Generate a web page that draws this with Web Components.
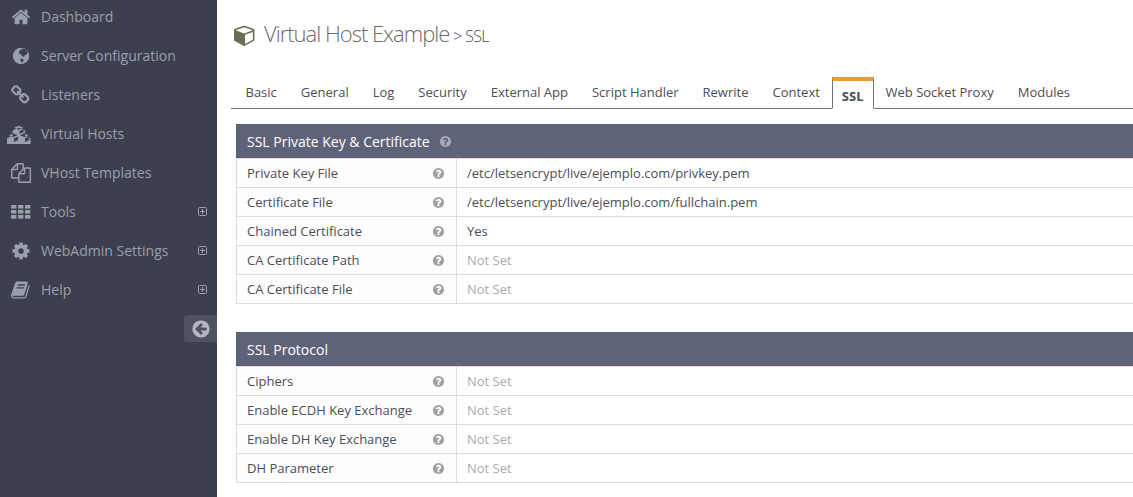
<!DOCTYPE html>
<html>
<head>
<meta charset="utf-8">
<title>SSL</title>
<style>
  html, body { margin: 0; height: 100%; overflow: hidden; background: #fff; }
  body { display: flex; font-family: "Open Sans", sans-serif; }
</style>
</head>
<body>
<side-bar></side-bar>
<main-panel>
  <page-title name="Virtual Host Example" sub="&gt; SSL"></page-title>
  <tab-bar active="SSL" tabs="Basic,General,Log,Security,External App,Script Handler,Rewrite,Context,SSL,Web Socket Proxy,Modules"></tab-bar>
  <config-table heading="SSL Private Key &amp; Certificate" help>
    <config-row label="Private Key File">/etc/letsencrypt/live/ejemplo.com/privkey.pem</config-row>
    <config-row label="Certificate File">/etc/letsencrypt/live/ejemplo.com/fullchain.pem</config-row>
    <config-row label="Chained Certificate">Yes</config-row>
    <config-row label="CA Certificate Path" unset>Not Set</config-row>
    <config-row label="CA Certificate File" unset>Not Set</config-row>
  </config-table>
  <config-table heading="SSL Protocol">
    <config-row label="Ciphers" unset>Not Set</config-row>
    <config-row label="Enable ECDH Key Exchange" unset>Not Set</config-row>
    <config-row label="Enable DH Key Exchange" unset>Not Set</config-row>
    <config-row label="DH Parameter" unset>Not Set</config-row>
  </config-table>
</main-panel>

<script>
const ICONS = {
  home: ['0 0 1792 1792', 'M1472 992v480q0 26-19 45t-45 19h-384v-384h-256v384h-384q-26 0-45-19t-19-45v-480q0-1 .5-3t.5-3l575-474 575 474q1 2 1 6zm223-69l-62 74q-8 9-21 11h-3q-13 0-21-7l-692-577-692 577q-12 8-24 7-13-2-21-11l-62-74q-8-10-7-23.5t11-21.5l719-599q32-26 76-26t76 26l244 204v-195q0-14 9-23t23-9h192q14 0 23 9t9 23v408l219 182q10 8 11 21.5t-7 23.5z'],
  link: ['0 0 1792 1792', 'M1456 1216q0-40-28-68l-208-208q-28-28-68-28-42 0-72 32 3 3 19 18.5t21.5 21.5 15 19 13 25.5 3.5 27.5q0 40-28 68t-68 28q-15 0-27.5-3.5t-25.5-13-19-15-21.5-21.5-18.5-19q-33 31-33 73 0 40 28 68l206 207q27 27 68 27 40 0 68-26l147-146q28-28 28-67zm-703-705q0-40-28-68l-206-207q-28-28-68-28-39 0-68 27l-147 146q-28 28-28 67 0 40 28 68l208 208q27 27 68 27 42 0 72-31-3-3-19-18.5t-21.5-21.5-15-19-13-25.5-3.5-27.5q0-40 28-68t68-28q15 0 27.5 3.5t25.5 13 19 15 21.5 21.5 18.5 19q33-31 33-73zm895 705q0 120-85 203l-147 146q-83 83-203 83-121 0-204-85l-206-207q-83-83-83-203 0-123 88-209l-88-88q-86 88-208 88-120 0-204-84l-208-208q-84-84-84-204t85-203l147-146q83-83 203-83 121 0 204 85l206 207q83 83 83 203 0 123-88 209l88 88q86-88 208-88 120 0 204 84l208 208q84 84 84 204z'],
  cubes: ['0 0 2304 1792', 'M640 1632l384-192v-314l-384 164v342zm-64-454l404-173-404-173-404 173 404 173zm1088 454l384-192v-314l-384 164v342zm-64-454l404-173-404-173-404 173 404 173zm-448-293l384-165v-266l-384 164v267zm-64-379l441-189-441-189-441 189 441 189zm1088 846v416q0 36-19 67t-52 47l-448 224q-25 14-57 14t-57-14l-448-224q-4-2-7-4-2 2-7 4l-448 224q-25 14-57 14t-57-14l-448-224q-33-16-52-47t-19-67v-416q0-38 21.5-70t56.5-48l434-186v-400q0-38 21.5-70t56.5-48l448-192q23-10 50-10t50 10l448 192q35 16 56.5 48t21.5 70v400l434 186q36 16 57 48t21 70z'],
  files: ['0 0 1792 1792', 'M1696 384q40 0 68 28t28 68v1216q0 40-28 68t-68 28h-960q-40 0-68-28t-28-68v-288h-544q-40 0-68-28t-28-68v-672q0-40 20-88t48-76l408-408q28-28 76-48t88-20h416q40 0 68 28t28 68v328q68-40 128-40h416zm-544 213l-299 299h299v-299zm-640-384l-299 299h299v-299zm196 647l316-316v-416h-384v416q0 40-28 68t-68 28h-416v640h512v-256q0-40 20-88t48-76zm956 804v-1152h-384v416q0 40-28 68t-68 28h-416v640h896z'],
  cog: ['0 0 1792 1792', 'M1152 896q0-106-75-181t-181-75-181 75-75 181 75 181 181 75 181-75 75-181zm512-109v222q0 12-8 23t-20 13l-185 28q-19 54-39 91 35 50 107 138 10 12 10 25t-9 23q-27 37-99 108t-94 71q-12 0-26-9l-138-108q-44 23-91 38-16 136-29 186-7 28-36 28h-222q-14 0-24.5-8.5t-11.5-21.5l-28-184q-49-16-90-37l-141 107q-10 9-25 9-14 0-25-11-126-114-165-168-7-10-7-23 0-12 8-23 15-21 51-66.5t54-70.5q-27-50-41-99l-183-27q-13-2-21-12.5t-8-23.5v-222q0-12 8-23t19-13l186-28q14-46 39-92-40-57-107-138-10-12-10-24 0-10 9-23 26-36 98.5-107.5t94.5-71.5q13 0 26 10l138 107q44-23 91-38 16-136 29-186 7-28 36-28h222q14 0 24.5 8.5t11.5 21.5l28 184q49 16 90 37l142-107q9-9 24-9 13 0 25 10 129 119 165 170 7 8 7 22 0 12-8 23-15 21-51 66.5t-54 70.5q26 50 41 98l183 28q13 2 22 12.5t9 23.5z'],
  book: ['0 0 1792 1792', 'M1639 478q40 57 18 129l-275 906q-19 64-76.5 107.5t-122.5 43.5h-923q-77 0-148.5-53.5t-99.5-131.5q-24-67-2-127 0-4 3-27t4-37q1-8-3-21.5t-3-19.5q2-11 8-21t16.5-23.5 16.5-23.5q23-38 45-91.5t30-91.5q3-10 .5-30t-.5-28q3-11 17-28t17-23q21-36 42-92t25-90q1-9-2.5-32t.5-28q4-13 22-30.5t22-22.5q19-26 42.5-84.5t27.5-96.5q1-8-3-25.5t-2-26.5q2-8 9-18t18-23 17-21q8-12 16.5-30.5t15-35 16-36 19.5-32 26.5-23.5 36-11.5 47.5 5.5l-1 3q38-9 51-9h761q74 0 114 56t18 130l-274 906q-36 119-71.5 153.5t-128.5 34.5h-869q-27 0-38 15-11 16-1 43 24 70 144 70h923q29 0 56-15.5t35-41.5l300-987q7-22 5-57 38 15 59 43zm-1064 2q-4 13 2 22.5t20 9.5h608q13 0 25.5-9.5t16.5-22.5l21-64q4-13-2-22.5t-20-9.5h-608q-13 0-25.5 9.5t-16.5 22.5zm-83 256q-4 13 2 22.5t20 9.5h608q13 0 25.5-9.5t16.5-22.5l21-64q4-13-2-22.5t-20-9.5h-608q-13 0-25.5 9.5t-16.5 22.5z'],
  arrow: ['0 0 1792 1792', 'M1408 960v-128q0-26-19-45t-45-19h-502l189-189q19-19 19-45t-19-45l-91-91q-18-18-45-18t-45 18l-362 362-91 91q-18 18-18 45t18 45l91 91 362 362q18 18 45 18t45-18l91-91q18-18 18-45t-18-45l-189-189h502q26 0 45-19t19-45zm256-64q0 209-103 385.5t-279.5 279.5-385.5 103-385.5-103-279.5-279.5-103-385.5 103-385.5 279.5-279.5 385.5-103 385.5 103 279.5 279.5 103 385.5z'],
  help: ['0 0 1792 1792', 'M1024 1376v-192q0-14-9-23t-23-9h-192q-14 0-23 9t-9 23v192q0 14 9 23t23 9h192q14 0 23-9t9-23zm256-672q0-88-55.5-163t-138.5-116-170-41q-243 0-371 213-15 24 8 42l132 100q7 6 19 6 16 0 25-12 53-68 86-92 34-24 86-24 48 0 85.5 26t37.5 59q0 38-20 61t-68 45q-63 28-115.5 86.5t-52.5 125.5v36q0 14 9 23t23 9h192q14 0 23-9t9-23q0-19 21.5-49.5t54.5-49.5q32-18 49-28.5t46-35 44.5-48 28-60.5 12.5-81zm384 192q0 209-103 385.5t-279.5 279.5-385.5 103-385.5-103-279.5-279.5-103-385.5 103-385.5 279.5-279.5 385.5-103 385.5 103 279.5 279.5 103 385.5z'],
  cube: ['0 0 1792 1792', 'M896 1629l640-349v-636l-640 233v752zm-64-865l698-254-698-254-698 254zm832-252v768q0 35-18 65t-49 47l-704 384q-28 16-61 16t-61-16l-704-384q-31-17-49-47t-18-65v-768q0-40 23-73t61-47l704-256q22-8 44-8t44 8l704 256q38 14 61 47t23 73z']
}

function svgIcon (name, w, h) {
  const [box, d] = ICONS[name]
  return `<svg width="${w}" height="${h}" viewBox="${box}" fill="currentColor" aria-hidden="true"><path d="${d}"/></svg>`
}

// no single path for the globe, a disc with the land cut out of it is close enough
const globeIcon = `<svg width="18" height="18" viewBox="0 0 18 18" aria-hidden="true">
  <circle cx="9" cy="9" r="8.2" fill="currentColor"/>
  <path fill="#3c3f4d" d="M8 3.2l3-1.6 3 1 1.6 2.6-1 2.4-2 .6-.4 1.8-1.8-.8L8.6 7 6.6 6.2z"/>
  <path fill="#3c3f4d" d="M8.4 11.4l2.4.6 1 1.4-1.8 2.2-1-.4-.4-2.2z"/>
</svg>`

const thIcon = `<svg width="20" height="15" viewBox="0 0 20 15" fill="currentColor" aria-hidden="true">
  <rect x="0" y="1" width="5.4" height="3.6"/><rect x="7" y="1" width="5.4" height="3.6"/><rect x="14" y="1" width="5.4" height="3.6"/>
  <rect x="0" y="6" width="5.4" height="3.6"/><rect x="7" y="6" width="5.4" height="3.6"/><rect x="14" y="6" width="5.4" height="3.6"/>
  <rect x="0" y="11" width="5.4" height="3.6"/><rect x="7" y="11" width="5.4" height="3.6"/><rect x="14" y="11" width="5.4" height="3.6"/>
</svg>`

const plusBox = `<svg width="9" height="9" viewBox="0 0 9 9" fill="none" stroke="currentColor" aria-hidden="true">
  <rect x=".5" y=".5" width="8" height="8" rx="1"/><path d="M2 4.5h5M4.5 2v5"/>
</svg>`

class SideBar extends HTMLElement {
  constructor () {
    super()
    this.attachShadow({ mode: 'open' })
  }

  connectedCallback () {
    const items = [
      { text: 'Dashboard', icon: svgIcon('home', 20, 20) },
      { text: 'Server Configuration', icon: globeIcon },
      { text: 'Listeners', icon: svgIcon('link', 20, 20) },
      { text: 'Virtual Hosts', icon: svgIcon('cubes', 25, 20).replace('<svg', '<svg class="wide"') },
      { text: 'VHost Templates', icon: svgIcon('files', 20, 20) },
      { text: 'Tools', icon: thIcon, more: true },
      { text: 'WebAdmin Settings', icon: svgIcon('cog', 20, 20), more: true },
      { text: 'Help', icon: svgIcon('book', 20, 20), more: true }
    ]
    const rows = items.map((item) => `
      <li>
        <span class="icon">${item.icon}</span>
        <span class="text">${item.text}</span>
        ${item.more ? `<span class="more">${plusBox}</span>` : ''}
      </li>
    `).join('')

    this.shadowRoot.innerHTML = /* html */`
      <style>
        :host {
          display: flex;
          flex-direction: column;
          flex: 0 0 217px;
          height: 100vh;
          background: #3c3f4d;
          color: #9a9fad;
          font-size: 14px;
        }
        ul { list-style: none; margin: -3px 0 0; padding: 0; }
        li { display: flex; align-items: center; height: 39px; padding: 0 10px 0 7px; }
        .icon { display: flex; justify-content: center; width: 27px; margin-right: 7px; }
        .wide { margin-left: -2px; }
        .text { flex: 1; }
        .more { display: flex; margin-right: 0; }
        .collapse {
          display: flex;
          align-items: center;
          justify-content: center;
          align-self: flex-end;
          width: 33px;
          height: 27px;
          margin-top: 6px;
          background: #4f5260;
          border-radius: 3px 0 0 3px;
          color: #b4b7c1;
        }
      </style>
      <ul>${rows}</ul>
      <div class="collapse">${svgIcon('arrow', 20, 20)}</div>
    `
  }
}

class MainPanel extends HTMLElement {
  constructor () {
    super()
    this.attachShadow({ mode: 'open' })
    this.shadowRoot.innerHTML = `
      <style>
        :host {
          display: block;
          flex: 1;
          min-width: 0;
          padding: 0 0 0 14px;
          color: #4a4d5a;
          font-size: 13px;
        }
      </style>
      <slot></slot>
    `
  }
}

class PageTitle extends HTMLElement {
  constructor () {
    super()
    this.attachShadow({ mode: 'open' })
  }

  connectedCallback () {
    this.shadowRoot.innerHTML = /* html */`
      <style>
        :host {
          display: flex;
          align-items: baseline;
          height: 70px;
          box-sizing: border-box;
          padding: 18px 0 0 3px;
        }
        svg { align-self: flex-start; margin: 6px 8px 0 0; color: #6b6c50; }
        h1 { margin: 0; font-size: 22px; line-height: 30px; font-weight: 300; letter-spacing: -1px; color: #6b6c62; }
        span { margin-left: 4px; font-size: 16px; font-weight: 300; letter-spacing: -0.7px; color: #4a4d5a; }
      </style>
      ${svgIcon('cube', 22, 22)}
      <h1>${this.getAttribute('name')}</h1>
      <span>${this.getAttribute('sub').replace('>', '&gt;')}</span>
    `
  }
}

class TabBar extends HTMLElement {
  constructor () {
    super()
    this.attachShadow({ mode: 'open' })
  }

  connectedCallback () {
    const active = this.getAttribute('active')
    const tabs = this.getAttribute('tabs').split(',').map((name) => {
      return `<a class="${name === active ? 'active' : ''}">${name}</a>`
    }).join('')

    this.shadowRoot.innerHTML = /* html */`
      <style>
        :host {
          display: flex;
          align-items: flex-start;
          height: 39px;
          margin-bottom: 15px;
          box-sizing: border-box;
          padding-top: 6px;
          border-bottom: 1px solid #70727f;
          font-size: 13px;
        }
        a { display: block; padding: 7px 12px 0; color: #4a4d5a; }
        a:first-of-type { padding-left: 14.5px; }
        .active {
          margin-top: 1px;
          padding: 6px 9px 0;
          height: 21px;
          border: 1px solid #70727f;
          border-top: 4px solid #ee9a3a;
          border-bottom: 1px solid #fff;
          font-weight: 700;
          background: #fff;
        }
      </style>
      ${tabs}
    `
  }
}

class ConfigTable extends HTMLElement {
  constructor () {
    super()
    this.attachShadow({ mode: 'open' })
  }

  connectedCallback () {
    const help = this.hasAttribute('help') ? `<span class="help">${svgIcon('help', 13, 13)}</span>` : ''
    this.shadowRoot.innerHTML = /* html */`
      <style>
        :host { display: block; margin: 0 -1px 28px 5px; }
        header {
          display: flex;
          align-items: center;
          height: 34px;
          padding-left: 11px;
          border-bottom: 1px solid #ddd;
          background: #5f6379;
          background-clip: padding-box;
          color: #fff;
          font-size: 14px;
        }
        .help { display: flex; margin-left: 9px; color: #a9abb6; }
      </style>
      <header>${this.getAttribute('heading').replace('&', '&amp;')}${help}</header>
      <slot></slot>
    `
  }
}

class ConfigRow extends HTMLElement {
  constructor () {
    super()
    this.attachShadow({ mode: 'open' })
  }

  connectedCallback () {
    this.shadowRoot.innerHTML = /* html */`
      <style>
        :host {
          display: flex;
          height: 29px;
          box-sizing: border-box;
          border: 1px solid #ddd;
          border-top: 0;
          line-height: 28px;
        }
        .label {
          display: flex;
          justify-content: space-between;
          align-items: center;
          width: 220px;
          box-sizing: border-box;
          flex: none;
          padding: 0 11px 0 10px;
          border-right: 1px solid #ddd;
          background: #fdfdfd;
        }
        .label svg { display: block; color: #a0a0a0; }
        .value { padding-left: 10px; color: ${this.hasAttribute('unset') ? '#aaa' : '#4a4d5a'}; }
      </style>
      <div class="label"><span>${this.getAttribute('label')}</span>${svgIcon('help', 13, 13)}</div>
      <div class="value"><slot></slot></div>
    `
  }
}

customElements.define('side-bar', SideBar)
customElements.define('main-panel', MainPanel)
customElements.define('page-title', PageTitle)
customElements.define('tab-bar', TabBar)
customElements.define('config-table', ConfigTable)
customElements.define('config-row', ConfigRow)
</script>
</body>
</html>
